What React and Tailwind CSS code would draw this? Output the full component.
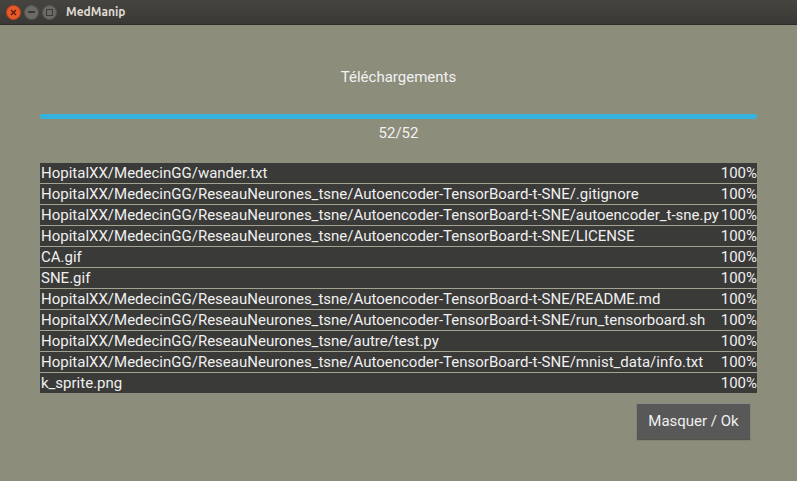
import React from "react";

const rows = [
  "HopitalXX/MedecinGG/wander.txt",
  "HopitalXX/MedecinGG/ReseauNeurones_tsne/Autoencoder-TensorBoard-t-SNE/.gitignore",
  "HopitalXX/MedecinGG/ReseauNeurones_tsne/Autoencoder-TensorBoard-t-SNE/autoencoder_t-sne.py",
  "HopitalXX/MedecinGG/ReseauNeurones_tsne/Autoencoder-TensorBoard-t-SNE/LICENSE",
  "CA.gif",
  "SNE.gif",
  "HopitalXX/MedecinGG/ReseauNeurones_tsne/Autoencoder-TensorBoard-t-SNE/README.md",
  "HopitalXX/MedecinGG/ReseauNeurones_tsne/Autoencoder-TensorBoard-t-SNE/run_tensorboard.sh",
  "HopitalXX/MedecinGG/ReseauNeurones_tsne/autre/test.py",
  "HopitalXX/MedecinGG/ReseauNeurones_tsne/Autoencoder-TensorBoard-t-SNE/mnist_data/info.txt",
  "k_sprite.png",
];

export default function App() {
  return (
    <div className="w-[797px] h-[481px] flex flex-col bg-[#8d8d7c] overflow-hidden" style={{ fontFamily: "Roboto, sans-serif" }}>
      <div className="h-[25px] flex items-center bg-gradient-to-b from-[#45443f] to-[#3a3935] border-b border-[#2e2d2a]">
        <div className="flex items-center gap-[3px] pl-[6px]">
          <div className="w-[15px] h-[15px] rounded-full bg-[#e95a2b] border border-[#b8431c] flex items-center justify-center">
            <svg width="7" height="7" viewBox="0 0 7 7"><path d="M1 1L6 6M6 1L1 6" stroke="#5a1a08" strokeWidth="1.3" /></svg>
          </div>
          <div className="w-[15px] h-[15px] rounded-full bg-[#6b6a65] border border-[#55544f] flex items-center justify-center">
            <div className="w-[7px] h-[2px] bg-[#3b3a36]" />
          </div>
          <div className="w-[15px] h-[15px] rounded-full bg-[#6b6a65] border border-[#55544f] flex items-center justify-center">
            <div className="w-[7px] h-[7px] border-[1.5px] border-[#3b3a36]" />
          </div>
        </div>
        <div className="ml-[9px] text-[12px] font-bold text-[#dfdbd2]" style={{ fontFamily: "Ubuntu, 'DejaVu Sans', sans-serif" }}>MedManip</div>
      </div>
      <div className="flex-1 flex flex-col px-[40px]">
        <div className="h-[32px] mt-[36px] flex items-center justify-center text-[15px] text-[#f2f2f2]">Téléchargements</div>
        <div className="mt-[21px] h-[5px] bg-[#35b3df] rounded-[2px]" />
        <div className="mt-[4px] h-[20px] flex items-center justify-center text-[15px] text-[#f2f2f2]">52/52</div>
        <div className="mt-[20px] flex flex-col gap-px bg-[#a3a392]">
          {rows.map((r, i) => (
            <div key={i} className="h-[20px] bg-[#3a3a38] flex items-center justify-between text-[15px] text-[#f0f0f0] leading-none">
              <span className="pl-px whitespace-nowrap">{r}</span>
              <span className="whitespace-nowrap">100%</span>
            </div>
          ))}
        </div>
        <div className="flex justify-end mt-[10px] pr-[7px]">
          <div className="w-[113px] h-[36px] bg-[#585858] border-t border-[#8a8a8a] shadow-[0_1px_1px_rgba(0,0,0,0.4)] flex items-center justify-center text-[15px] text-[#f0f0f0]">Masquer / Ok</div>
        </div>
      </div>
    </div>
  );
}
